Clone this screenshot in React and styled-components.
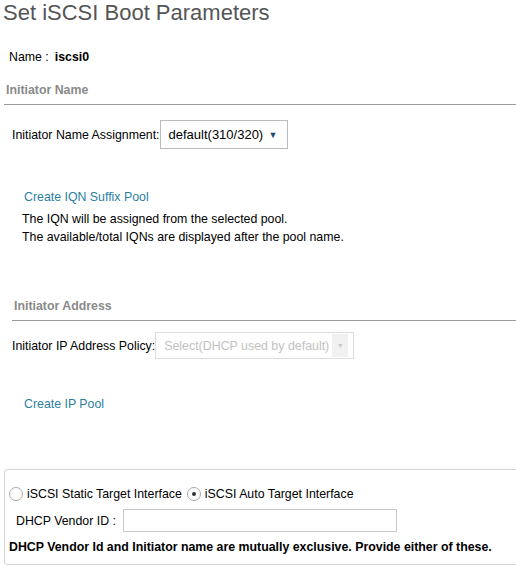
import React from 'react'
import styled, { createGlobalStyle } from 'styled-components'

const GlobalStyle = createGlobalStyle`
  html, body {
    margin: 0;
    padding: 0;
    background: #fff;
  }
  body {
    font-family: 'Liberation Sans', Arial, sans-serif;
    font-size: 12.35px;
    color: #000;
  }
`

const Page = styled.div`
  width: 516px;
  height: 567px;
  overflow: hidden;
`

const Title = styled.h1`
  margin: 0;
  padding: 0 0 0 3px;
  height: 28px;
  line-height: 26px;
  font-size: 22px;
  font-weight: 400;
  color: #555;
`

const NameRow = styled.div`
  margin-top: 21px;
  padding-left: 9px;
  line-height: 16px;
`

const Bold = styled.b`
  margin-left: 6px;
  font-weight: 700;
`

const SectionHeader = styled.div`
  margin-top: ${p => p.$top}px;
  margin-left: ${p => p.$indent}px;
  padding: 0 0 6px ${p => p.$pad}px;
  border-bottom: 1px solid #9a9a9a;
  font-weight: 700;
  color: #8a8a8a;
  line-height: 16px;
`

const FieldRow = styled.div`
  display: flex;
  align-items: center;
  margin-top: ${p => p.$top}px;
  padding-left: ${p => p.$indent}px;
`

const Label = styled.span`
  line-height: 16px;
  white-space: nowrap;
`

const Select = styled.div`
  display: flex;
  align-items: center;
  justify-content: space-between;
  box-sizing: border-box;
  width: ${p => p.$width}px;
  height: ${p => p.$height}px;
  border: 1px solid ${p => (p.$disabled ? '#ddd' : '#bbb')};
  padding-left: ${p => (p.$disabled ? 8 : 8)}px;
  font-size: ${p => (p.$disabled ? 12.4 : 13)}px;
  white-space: nowrap;
  color: ${p => (p.$disabled ? '#c2c2c2' : '#000')};
`

const Caret = styled.span`
  margin-right: 9px;
  font-size: 9px;
  color: #1f4d72;
`

const DisabledCaret = styled.span`
  display: flex;
  align-items: center;
  justify-content: center;
  width: 16px;
  height: calc(100% - 2px);
  margin-right: 5px;
  background: #f1f1f1;
  color: #c8c8c8;
  font-size: 7px;
`

const Link = styled.a`
  display: block;
  margin-top: ${p => p.$top}px;
  padding-left: 24px;
  line-height: 16px;
  color: #2a7f9f;
  text-decoration: none;
`

const Help = styled.div`
  margin-top: 5px;
  padding-left: 22px;
  line-height: 18px;
`

const Panel = styled.div`
  margin: ${p => p.$top}px -6px 0 4px;
  box-sizing: border-box;
  height: 96px;
  border: 1px solid #d4d4d4;
  border-radius: 3px;
  padding: 16px 0 0 4px;
`

const RadioRow = styled.div`
  display: flex;
  align-items: center;
`

const Radio = styled.span`
  box-sizing: border-box;
  width: 14px;
  height: 14px;
  margin-right: 4px;
  border: 1px solid #aaa;
  border-radius: 50%;
  display: flex;
  align-items: center;
  justify-content: center;
  &::after {
    content: '';
    width: 4px;
    height: 4px;
    border-radius: 50%;
    background: ${p => (p.$checked ? '#333' : 'transparent')};
  }
`

const RadioLabel = styled.span`
  margin-right: 5px;
  line-height: 16px;
`

const VendorRow = styled.div`
  display: flex;
  align-items: center;
  margin-top: 7px;
  padding-left: 7px;
`

const TextInput = styled.div`
  box-sizing: border-box;
  width: 274px;
  height: 23px;
  margin-left: 7px;
  border: 1px solid #c8c8c8;
`

const Note = styled.div`
  margin-top: 7px;
  font-weight: 700;
  line-height: 16px;
  white-space: nowrap;
`

export default function App() {
  return (
    <Page>
      <GlobalStyle />
      <Title>Set iSCSI Boot Parameters</Title>
      <NameRow>
        Name :<Bold>iscsi0</Bold>
      </NameRow>

      <SectionHeader $top={17} $indent={4} $pad={2}>
        Initiator Name
      </SectionHeader>
      <FieldRow $top={15} $indent={12}>
        <Label>Initiator Name Assignment:</Label>
        <Select $width={128} $height={29}>
          <span>default(310/320)</span>
          <Caret>▼</Caret>
        </Select>
      </FieldRow>
      <Link $top={40}>Create IQN Suffix Pool</Link>
      <Help>
        The IQN will be assigned from the selected pool.
        <br />
        The available/total IQNs are displayed after the pool name.
      </Help>

      <SectionHeader $top={52} $indent={12} $pad={2}>
        Initiator Address
      </SectionHeader>
      <FieldRow $top={11} $indent={12}>
        <Label>Initiator IP Address Policy:</Label>
        <Select $width={199} $height={27} $disabled>
          <span>Select(DHCP used by default)</span>
          <DisabledCaret>▼</DisabledCaret>
        </Select>
      </FieldRow>
      <Link $top={37}>Create IP Pool</Link>

      <Panel $top={57}>
        <RadioRow>
          <Radio />
          <RadioLabel>iSCSI Static Target Interface</RadioLabel>
          <Radio $checked />
          <RadioLabel>iSCSI Auto Target Interface</RadioLabel>
        </RadioRow>
        <VendorRow>
          <Label>DHCP Vendor ID :</Label>
          <TextInput />
        </VendorRow>
        <Note>DHCP Vendor Id and Initiator name are mutually exclusive. Provide either of these.</Note>
      </Panel>
    </Page>
  )
}
